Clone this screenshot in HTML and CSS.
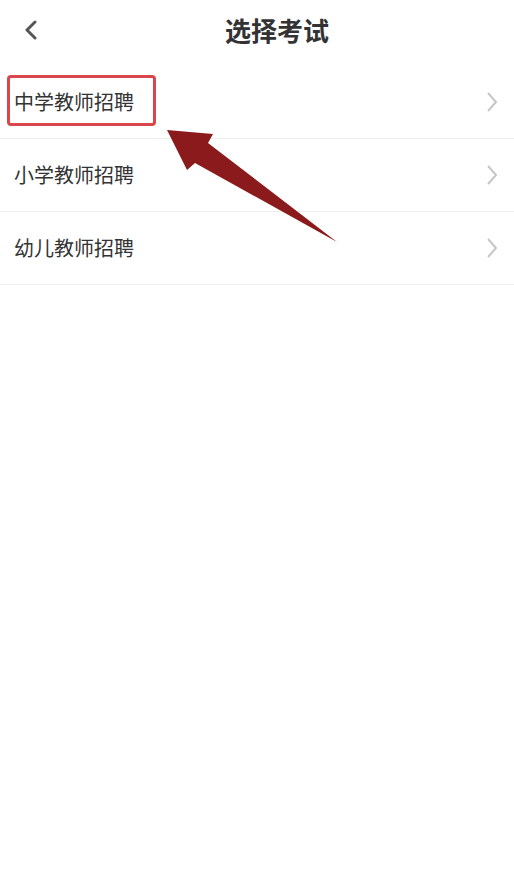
FILE: index.html
```html
<!DOCTYPE html>
<html lang="zh-CN">
<head>
<meta charset="utf-8">
<title>选择考试</title>
<link rel="stylesheet" href="styles.css">
</head>
<body>
<div class="page">
  <header class="header">
    <svg class="back" width="14" height="20" viewBox="0 0 14 20"><path d="M11 2 L3 10 L11 18" fill="none" stroke="#555" stroke-width="3" stroke-linecap="round" stroke-linejoin="round"/></svg>
    <h1 class="title">选择考试</h1>
  </header>
  <ul class="list">
    <li class="row">
      <span class="label">中学教师招聘</span>
      <svg class="chev" width="12" height="20" viewBox="0 0 12 20"><path d="M2 1 L10 10 L2 19" fill="none" stroke="#c6c6c6" stroke-width="2"/></svg>
      <span class="highlight"></span>
    </li>
    <li class="row">
      <span class="label">小学教师招聘</span>
      <svg class="chev" width="12" height="20" viewBox="0 0 12 20"><path d="M2 1 L10 10 L2 19" fill="none" stroke="#c6c6c6" stroke-width="2"/></svg>
    </li>
    <li class="row">
      <span class="label">幼儿教师招聘</span>
      <svg class="chev" width="12" height="20" viewBox="0 0 12 20"><path d="M2 1 L10 10 L2 19" fill="none" stroke="#c6c6c6" stroke-width="2"/></svg>
    </li>
  </ul>
  <svg class="arrow" width="514" height="300" viewBox="0 0 514 300"><polygon points="167,130 213,134 208,143 337,242 195,163 187,170" fill="#8a1a1c"/></svg>
</div>
</body>
</html>
```
FILE: styles.css
```css
html, body {
  margin: 0;
  padding: 0;
  background: #fff;
}
body {
  font-family: "Noto Sans CJK SC", "Noto Sans", sans-serif;
  color: #333;
}
.page {
  position: relative;
  width: 514px;
  min-height: 880px;
}
.header {
  height: 66px;
  display: flex;
  align-items: center;
  padding-left: 24px;
  box-sizing: border-box;
}
.back {
  display: block;
  margin-top: -6px;
}
.title {
  margin: -6px 0 0 187px;
  font-size: 26px;
  font-weight: 700;
  color: #333;
  letter-spacing: 0;
  line-height: 1;
}
.list {
  list-style: none;
  margin: 0;
  padding: 0;
}
.row {
  position: relative;
  height: 72px;
  border-bottom: 1px solid #eeeeee;
  display: flex;
  align-items: center;
  justify-content: space-between;
  padding: 0 16px 0 14px;
}
.label {
  font-size: 20px;
  color: #333;
  line-height: 1;
}
.chev {
  display: block;
}
.highlight {
  position: absolute;
  left: 7px;
  top: 9px;
  width: 143px;
  height: 45px;
  border: 3px solid #d9474c;
  border-radius: 4px;
}
.arrow {
  position: absolute;
  left: 0;
  top: 0;
  pointer-events: none;
}
```
